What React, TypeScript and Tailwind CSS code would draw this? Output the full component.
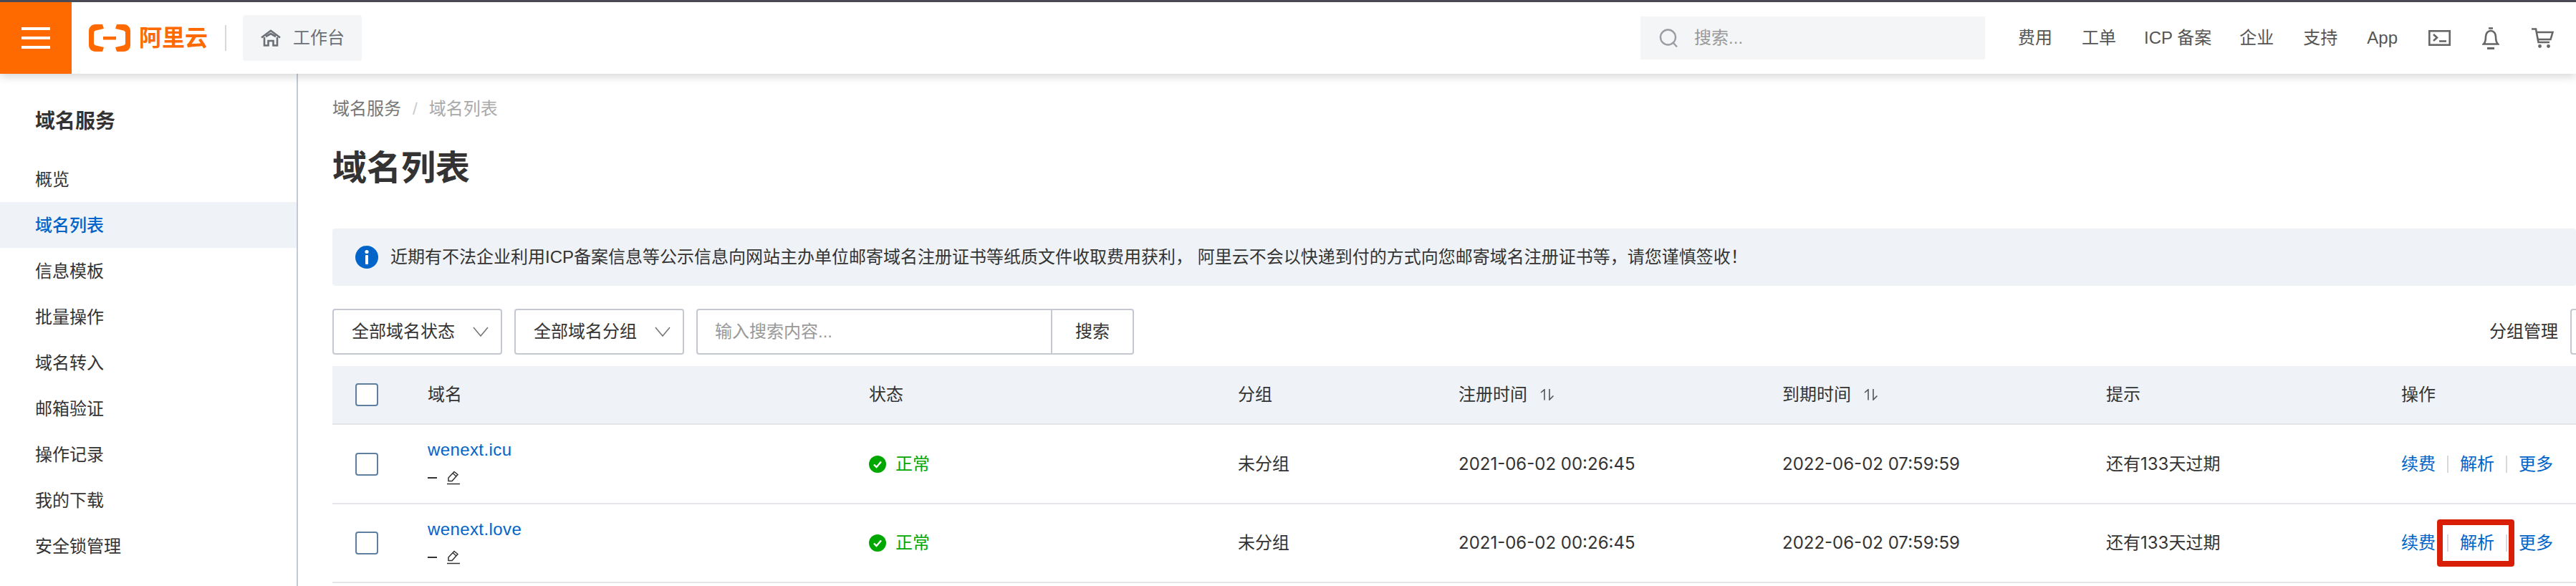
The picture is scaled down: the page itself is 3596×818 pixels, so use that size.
import type { ReactNode } from "react";

const MENU = ["概览", "域名列表", "信息模板", "批量操作", "域名转入", "邮箱验证", "操作记录", "我的下载", "安全锁管理"];
const COLS = "grid grid-cols-[133px_616px_515px_308px_452px_452px_412px_1fr] items-center";

const ROWS = [
  { name: "wenext.icu", hit: false, height: "h-[111px]" },
  { name: "wenext.love", hit: true, height: "h-[110px]" },
];

function Logo() {
  return (
    <svg width="58" height="38" viewBox="0 0 58 38" fill="none" className="shrink-0">
      <path d="M19 0H9C4 0 0 4 0 9V29C0 34 4 38 9 38H19L21 32L10 29.5C8 29 7 28 7 26V12C7 10 8 9 10 8.5L21 6Z" fill="#ff6a00" />
      <path d="M39 0H49C54 0 58 4 58 9V29C58 34 54 38 49 38H39L37 32L48 29.5C50 29 51 28 51 26V12C51 10 50 9 48 8.5L37 6Z" fill="#ff6a00" />
      <rect x="20" y="17" width="18" height="4.5" fill="#ff6a00" />
    </svg>
  );
}

function HomeIcon() {
  return (
    <svg width="28" height="24" viewBox="0 0 28 24" fill="none" stroke="#6b6f76" strokeWidth="2.6" className="shrink-0">
      <path d="M1 11.5L14 1.8L27 11.5" />
      <path d="M5 11V22.5H10.5V16H17.5V22.5H23V11" />
      <path d="M7 10L14 6L21 10" />
    </svg>
  );
}

function SearchIcon() {
  return (
    <svg width="27" height="27" viewBox="0 0 27 27" fill="none" stroke="#9a9da3" strokeWidth="2.4" className="shrink-0">
      <circle cx="12.5" cy="12" r="10.5" />
      <path d="M20 20L25 25.5" />
    </svg>
  );
}

function TerminalIcon() {
  return (
    <svg width="31" height="22" viewBox="0 0 31 22" fill="none" stroke="#666" strokeWidth="2.6" className="ml-[2px] shrink-0">
      <rect x="1.3" y="1.3" width="28.4" height="19.4" />
      <path d="M7 6L12 10.5L7 15" />
      <path d="M15 15.5H25" />
    </svg>
  );
}

function BellIcon() {
  return (
    <svg width="24" height="31" viewBox="0 0 24 31" fill="none" stroke="#666" strokeWidth="2.6" className="ml-[3px] shrink-0">
      <path d="M9 1.5H15" />
      <path d="M2 23.5C5 21 5 17 5 13C5 8.5 8 5 12 5C16 5 19 8.5 19 13C19 17 19 21 22 23.5Z" />
      <path d="M7 29.5H17" strokeWidth="3" />
    </svg>
  );
}

function CartIcon() {
  return (
    <svg width="31" height="28" viewBox="0 0 31 28" fill="none" stroke="#666" strokeWidth="2.6" className="ml-1 shrink-0">
      <path d="M0 1.5H6L9.5 20H25" />
      <path d="M6.5 6H29.5L26.5 16H8.5" />
      <circle cx="11.5" cy="25.5" r="2.4" fill="#666" stroke="none" />
      <circle cx="23.5" cy="25.5" r="2.4" fill="#666" stroke="none" />
    </svg>
  );
}

function InfoIcon() {
  return (
    <svg width="32" height="32" viewBox="0 0 32 32" className="shrink-0">
      <circle cx="16" cy="16" r="16" fill="#0064c8" />
      <circle cx="16" cy="8.5" r="2.6" fill="#fff" />
      <rect x="14" y="13" width="4" height="13" rx="1" fill="#fff" />
    </svg>
  );
}

function CheckIcon() {
  return (
    <svg width="24" height="24" viewBox="0 0 24 24" fill="none" className="shrink-0">
      <circle cx="12" cy="12" r="12" fill="#00a700" />
      <path d="M7 12.5L10.5 16L17 8.5" stroke="#fff" strokeWidth="2.4" />
    </svg>
  );
}

function SortIcon() {
  return (
    <svg width="20" height="16" viewBox="0 0 20 16" fill="none" stroke="#555" strokeWidth="1.6" className="shrink-0">
      <path d="M1 5L6 0.8V15.5" />
      <path d="M13 0V15L18.5 9.5" />
    </svg>
  );
}

function PencilIcon() {
  return (
    <svg width="18" height="20" viewBox="0 0 18 20" fill="none" stroke="#333" strokeWidth="1.5" className="shrink-0">
      <path d="M2 10L10 1.5L15 5.5L7 14.5H2Z" />
      <path d="M8 3.5L13 8" />
      <path d="M0 18.5H18" />
    </svg>
  );
}

function Chevron() {
  return (
    <svg width="22" height="14" viewBox="0 0 22 14" fill="none" stroke="#777" strokeWidth="1.6" className="shrink-0">
      <path d="M1 1L11 13L21 1" />
    </svg>
  );
}

function Select({ label }: { label: string }) {
  return (
    <div className="flex h-16 w-[237px] items-center justify-between rounded-[4px] border-2 border-[#c4c8d0] pl-[25px] pr-[17px]">
      <span>{label}</span>
      <Chevron />
    </div>
  );
}

function Cell({ children, className = "" }: { children: ReactNode; className?: string }) {
  return <div className={`flex items-center ${className}`}>{children}</div>;
}

export default function App() {
  return (
    <div className="flex h-[818px] w-[3596px] flex-col overflow-hidden bg-white font-['Liberation_Sans','Noto_Sans_CJK_SC',sans-serif] text-[24px] leading-8 text-[#333]">
      <header className="relative z-10 flex h-[103px] shrink-0 items-center border-t-[3px] border-[#4a4a55] bg-white shadow-[0_4px_12px_rgba(0,0,0,0.16)]">
        <div className="flex h-[100px] w-[100px] flex-col items-center justify-center gap-[9px] bg-[#ff6a00]">
          <span className="h-1 w-10 bg-white" />
          <span className="h-1 w-10 bg-white" />
          <span className="h-1 w-10 bg-white" />
        </div>
        <div className="ml-6 flex items-center">
          <Logo />
          <span className="ml-3 text-[32px] leading-10 font-bold text-[#ff6a00]">阿里云</span>
        </div>
        <span className="ml-6 h-9 w-[2px] bg-[#d8d8d8]" />
        <div className="ml-[23px] flex h-16 w-[166px] items-center gap-[17px] rounded-[4px] bg-[#f4f5f7] pl-[25px] text-[#6b6f76]">
          <HomeIcon />
          <span>工作台</span>
        </div>
        <div className="ml-auto flex items-center gap-[41px] pr-[31px] text-[#555]">
          <div className="mr-[5px] flex h-[60px] w-[481px] items-center gap-[22px] bg-[#f4f5f7] pl-[26px] text-[#999]">
            <SearchIcon />
            <span>搜索...</span>
          </div>
          <span>费用</span>
          <span>工单</span>
          <span className="-mx-[2px]">ICP 备案</span>
          <span>企业</span>
          <span>支持</span>
          <span>App</span>
          <TerminalIcon />
          <BellIcon />
          <CartIcon />
        </div>
      </header>

      <div className="flex min-h-0 flex-1">
        <aside className="w-[416px] shrink-0 border-r-2 border-[#c4cad4] pt-[47px]">
          <h2 className="pl-[49px] text-[28px] leading-10 font-bold">域名服务</h2>
          <ul className="mt-[28px]">
            {MENU.map((m) => (
              <li
                key={m}
                className={`flex h-16 items-center pl-[49px] pt-[2px] ${m === "域名列表" ? "bg-[#eff3f8] font-medium text-[#0064c8]" : ""}`}
              >
                {m}
              </li>
            ))}
          </ul>
        </aside>

        <main className="min-w-0 flex-1 pl-[48px] pt-[33px]">
          <div className="flex items-center text-[#777]">
            <span>域名服务</span>
            <span className="mx-4 text-[#ccc]">/</span>
            <span className="text-[#aaa]">域名列表</span>
          </div>
          <h1 className="mt-[35px] text-[48px] leading-16 font-bold">域名列表</h1>

          <div className="mt-[52px] flex h-20 items-center gap-[17px] rounded-[4px] bg-[#eff3f8] pl-[32px]">
            <InfoIcon />
            <span>近期有不法企业利用ICP备案信息等公示信息向网站主办单位邮寄域名注册证书等纸质文件收取费用获利， 阿里云不会以快递到付的方式向您邮寄域名注册证书等，请您谨慎签收！</span>
          </div>

          <div className="mt-8 flex items-center gap-[17px]">
            <Select label="全部域名状态" />
            <Select label="全部域名分组" />
            <div className="flex h-16 w-[611px] items-center rounded-[4px] border-2 border-[#c4c8d0]">
              <span className="flex-1 pl-[24px] text-[#999]">输入搜索内容...</span>
              <span className="flex h-full w-[114px] items-center justify-center border-l-2 border-[#c4c8d0]">搜索</span>
            </div>
            <span className="ml-auto">分组管理</span>
            <span className="h-16 w-2 rounded-l-[4px] border-2 border-r-0 border-[#c4c8d0]" />
          </div>

          <div className={`mt-4 h-[82px] border-b-2 border-[#e3e5e9] bg-[#eff3f8] ${COLS}`}>
            <Cell className="pl-8">
              <span className="h-8 w-8 rounded-[4px] border-2 border-[#5f7fa0] bg-white" />
            </Cell>
            <Cell>域名</Cell>
            <Cell>状态</Cell>
            <Cell>分组</Cell>
            <Cell className="gap-[18px]">注册时间 <SortIcon /></Cell>
            <Cell className="gap-[18px]">到期时间 <SortIcon /></Cell>
            <Cell>提示</Cell>
            <Cell>操作</Cell>
          </div>

          {ROWS.map((r) => (
            <div key={r.name} className={`border-b-2 border-[#e3e5e9] ${r.height} ${COLS}`}>
              <Cell className="pl-8">
                <span className="h-8 w-8 rounded-[4px] border-2 border-[#5f7fa0]" />
              </Cell>
              <div className="pb-[6px]">
                <div className="tracking-[0.4px] text-[#0064c8]">{r.name}</div>
                <div className="mt-[13px] flex items-center gap-[14px]">
                  <span className="h-[2px] w-[13px] bg-[#333]" />
                  <PencilIcon />
                </div>
              </div>
              <Cell className="gap-[13px] text-[#00a700]">
                <CheckIcon />
                <span>正常</span>
              </Cell>
              <Cell>未分组</Cell>
              <Cell className="font-['Inter','Noto_Sans_CJK_SC',sans-serif]">2021-06-02 00:26:45</Cell>
              <Cell className="font-['Inter','Noto_Sans_CJK_SC',sans-serif]">2022-06-02 07:59:59</Cell>
              <Cell className="font-['Inter','Noto_Sans_CJK_SC',sans-serif]">还有133天过期</Cell>
              <Cell className="gap-4 text-[#0064c8]">
                <span>续费</span>
                <span className="h-6 w-[2px] bg-[#d8d8d8]" />
                <span className="relative">
                  解析
                  {r.hit && (
                    <span className="absolute -top-[17px] -right-[28px] -bottom-[17px] -left-[32px] rounded-[4px] border-[8px] border-[#d81e06]" />
                  )}
                </span>
                <span className="h-6 w-[2px] bg-[#d8d8d8]" />
                <span>更多</span>
              </Cell>
            </div>
          ))}
        </main>
      </div>
    </div>
  );
}
